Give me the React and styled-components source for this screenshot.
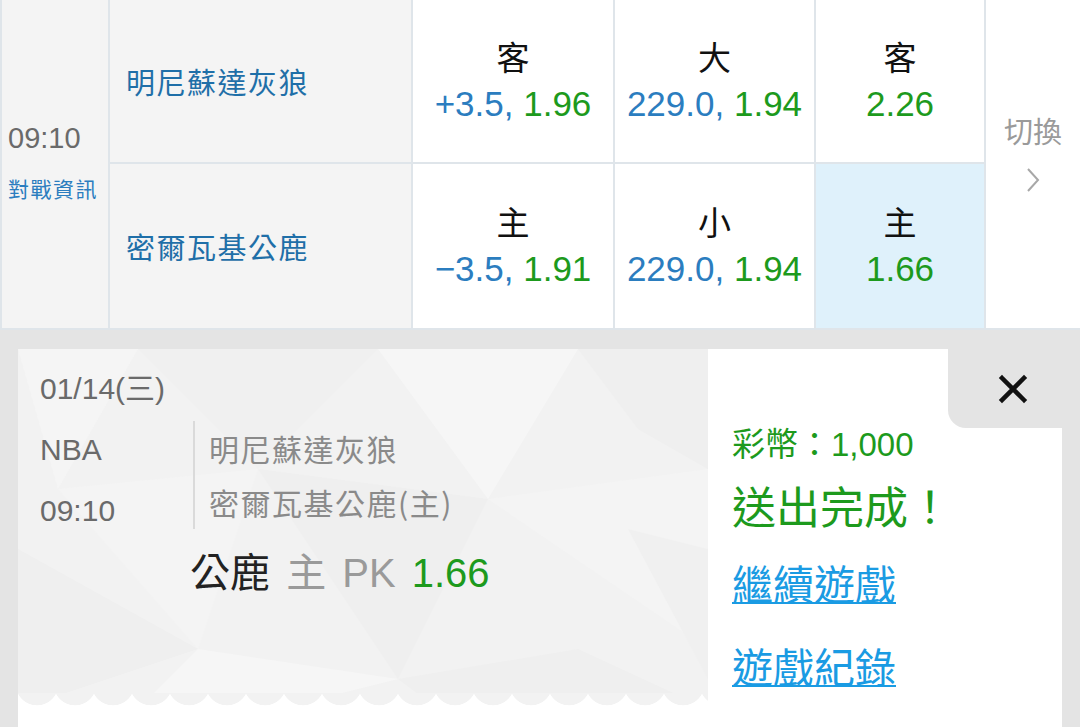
import React from "react";
import styled, { createGlobalStyle } from "styled-components";

const GlobalStyle = createGlobalStyle`
  html, body {
    margin: 0;
    padding: 0;
    background: #e4e4e4;
  }
  body {
    font-family: "Liberation Sans", "Noto Sans CJK TC", sans-serif;
  }
`;

const BLUE = "#2b7dbf";
const GREEN = "#1d9a1d";

const lowPoly = encodeURIComponent(`
<svg xmlns="http://www.w3.org/2000/svg" width="690" height="360" viewBox="0 0 690 360">
  <rect width="690" height="360" fill="#f2f2f2"/>
  <polygon points="0,0 120,0 40,140" fill="#f5f5f5"/>
  <polygon points="120,0 360,0 240,120" fill="#f0f0f0"/>
  <polygon points="360,0 560,0 470,150" fill="#f6f6f6"/>
  <polygon points="560,0 690,0 690,120 620,80" fill="#efefef"/>
  <polygon points="40,140 240,120 180,300" fill="#f4f4f4"/>
  <polygon points="240,120 470,150 380,330" fill="#efefef"/>
  <polygon points="470,150 690,120 690,300" fill="#f4f4f4"/>
  <polygon points="0,200 180,300 0,360" fill="#efefef"/>
  <polygon points="180,300 380,330 260,360 120,360" fill="#f6f6f6"/>
  <polygon points="380,330 560,300 690,360 420,360" fill="#efefef"/>
  <polygon points="610,180 690,200 690,330" fill="#f0f0f0"/>
</svg>`);

const Page = styled.div`
  width: 1080px;
  height: 727px;
  overflow: hidden;
  background: #e4e4e4;
`;

/* ---------- odds table ---------- */

const Table = styled.div`
  display: grid;
  grid-template-columns: 106px 301px 200px 199px 168px 1fr;
  grid-template-rows: 162px 164px;
  gap: 2px;
  padding-left: 2px;
  background: #dfe5ea;
  border-bottom: 2px solid #dfe5ea;
`;

const TimeCell = styled.div`
  grid-row: 1 / span 2;
  background: #f4f4f4;
  display: flex;
  flex-direction: column;
  justify-content: center;
  padding-left: 6px;
  padding-bottom: 6px;
`;

const TimeText = styled.div`
  font-size: 29px;
  line-height: 44px;
  margin-bottom: 10px;
  color: #6a6a6a;
`;

const InfoLink = styled.div`
  font-size: 21px;
  line-height: 36px;
  color: ${BLUE};
  font-family: "Noto Sans CJK TC", sans-serif;
  letter-spacing: 1.5px;
  white-space: nowrap;
`;

const TeamCell = styled.div`
  background: #f4f4f4;
  display: flex;
  align-items: center;
  padding-left: 16px;
  font-family: "Noto Sans CJK TC", sans-serif;
  font-size: 29px;
  color: #1f6fa8;
  letter-spacing: 1.5px;
`;

const OddsCell = styled.div`
  background: ${(p) => (p.$active ? "#dff1fb" : "#fff")};
  display: flex;
  flex-direction: column;
  align-items: center;
  justify-content: center;
`;

const OddsLabel = styled.div`
  font-family: "Noto Sans CJK TC", sans-serif;
  font-size: 33px;
  line-height: 46px;
  color: #111;
`;

const OddsValue = styled.div`
  font-size: 35px;
  line-height: 50px;
  white-space: nowrap;
`;

const Line = styled.span`
  color: ${BLUE};
`;

const Price = styled.span`
  color: ${GREEN};
`;

const SwitchCell = styled.div`
  grid-row: 1 / span 2;
  grid-column: 6;
  background: #fff;
  display: flex;
  flex-direction: column;
  align-items: center;
  justify-content: center;
  color: #9a9a9a;
  padding-bottom: 26px;
`;

const SwitchText = styled.div`
  font-family: "Noto Sans CJK TC", sans-serif;
  font-size: 29px;
  line-height: 44px;
  margin-bottom: 14px;
`;

/* ---------- result panel ---------- */

const Overlay = styled.div`
  padding: 19px 18px 0 18px;
`;

const Card = styled.div`
  display: flex;
  background: #fff;
  height: 380px;
`;

const Ticket = styled.div`
  width: 690px;
  display: flex;
  flex-direction: column;
`;

const TicketBody = styled.div`
  height: 344px;
  box-sizing: border-box;
  padding: 20px 22px 0 22px;
  background: #f2f2f2 url("data:image/svg+xml,${lowPoly}") no-repeat 0 0;
  color: #6a6a6a;
`;

const ZigZag = styled.div`
  height: 13px;
  background-image: radial-gradient(circle at 19px -9px, #f2f2f2 21px, transparent 21.6px);
  background-size: 38px 13px;
  background-repeat: repeat-x;
  background-position: 0 0;
`;

const DateText = styled.div`
  font-size: 30px;
  line-height: 40px;
`;

const InfoRow = styled.div`
  display: flex;
  align-items: flex-start;
  margin-top: 12px;
`;

const MetaCol = styled.div`
  width: 153px;
  font-size: 30px;
  line-height: 61px;
  margin-top: -2px;
`;

const TeamsCol = styled.div`
  border-left: 2px solid #dadada;
  padding-left: 14px;
  font-family: "Noto Sans CJK TC", sans-serif;
  font-size: 30px;
  line-height: 54px;
  color: #8a8a8a;
  letter-spacing: 1.5px;
`;

const PickLine = styled.div`
  margin-top: 4px;
  padding-left: 150px;
  font-size: 40px;
  line-height: 50px;
  word-spacing: 5px;
  white-space: nowrap;
`;

const PickTeam = styled.span`
  font-family: "Noto Sans CJK TC", sans-serif;
  color: #222;
`;

const PickSide = styled.span`
  color: #9a9a9a;
`;

const PickOdds = styled.span`
  color: ${GREEN};
`;

const Side = styled.div`
  flex: 1;
  display: flex;
  flex-direction: column;
`;

const TopBar = styled.div`
  display: flex;
  justify-content: flex-end;
`;

const CloseTab = styled.button`
  width: 114px;
  height: 79px;
  border: none;
  margin: 0;
  padding: 0 0 0 16px;
  background: #e4e4e4;
  border-bottom-left-radius: 18px;
  display: flex;
  align-items: center;
  justify-content: center;
`;

const SideContent = styled.div`
  padding-left: 24px;
  display: flex;
  flex-direction: column;
  align-items: flex-start;
  color: ${GREEN};
`;

const Coins = styled.div`
  font-size: 33px;
  line-height: 36px;
  margin-top: -1px;
  white-space: nowrap;
`;

const Done = styled.div`
  font-family: "Noto Sans CJK TC", sans-serif;
  font-size: 44px;
  line-height: 52px;
  margin-top: 16px;
`;

const ActionLink = styled.a`
  font-family: "Noto Sans CJK TC", sans-serif;
  font-size: 41px;
  line-height: 52px;
  color: #1a9be3;
  text-decoration: underline;
  text-decoration-thickness: 2px;
  text-underline-offset: 2px;
  margin-top: ${(p) => p.$gap}px;
  cursor: pointer;
`;

const CloseIcon = () => (
  <svg width="30" height="30" viewBox="0 0 30 30">
    <path d="M4 4 L26 26 M26 4 L4 26" stroke="#111" strokeWidth="4.5" strokeLinecap="square" />
  </svg>
);

const Chevron = () => (
  <svg width="16" height="28" viewBox="0 0 16 28">
    <path d="M3 3 L13 14 L3 25" fill="none" stroke="#a8a8a8" strokeWidth="2" />
  </svg>
);

const rows = [
  {
    team: "明尼蘇達灰狼",
    cells: [
      { label: "客", line: "+3.5, ", price: "1.96" },
      { label: "大", line: "229.0, ", price: "1.94" },
      { label: "客", line: "", price: "2.26" },
    ],
  },
  {
    team: "密爾瓦基公鹿",
    cells: [
      { label: "主", line: "−3.5, ", price: "1.91" },
      { label: "小", line: "229.0, ", price: "1.94" },
      { label: "主", line: "", price: "1.66", active: true },
    ],
  },
];

export default function App() {
  return (
    <Page>
      <GlobalStyle />
      <Table>
        <TimeCell>
          <TimeText>09:10</TimeText>
          <InfoLink>對戰資訊</InfoLink>
        </TimeCell>
        {rows.map((row, i) => (
          <React.Fragment key={row.team}>
            <TeamCell style={{ gridRow: i + 1 }}>{row.team}</TeamCell>
            {row.cells.map((c, j) => (
              <OddsCell key={j} $active={c.active} style={{ gridRow: i + 1 }}>
                <OddsLabel>{c.label}</OddsLabel>
                <OddsValue>
                  {c.line && <Line>{c.line}</Line>}
                  <Price>{c.price}</Price>
                </OddsValue>
              </OddsCell>
            ))}
          </React.Fragment>
        ))}
        <SwitchCell>
          <SwitchText>切換</SwitchText>
          <Chevron />
        </SwitchCell>
      </Table>

      <Overlay>
        <Card>
          <Ticket>
            <TicketBody>
              <DateText>01/14(三)</DateText>
              <InfoRow>
                <MetaCol>
                  <div>NBA</div>
                  <div>09:10</div>
                </MetaCol>
                <TeamsCol>
                  <div>明尼蘇達灰狼</div>
                  <div>密爾瓦基公鹿(主)</div>
                </TeamsCol>
              </InfoRow>
              <PickLine>
                <PickTeam>公鹿</PickTeam> <PickSide>主 PK</PickSide> <PickOdds>1.66</PickOdds>
              </PickLine>
            </TicketBody>
            <ZigZag />
          </Ticket>
          <Side>
            <TopBar>
              <CloseTab aria-label="close">
                <CloseIcon />
              </CloseTab>
            </TopBar>
            <SideContent>
              <Coins>彩幣：1,000</Coins>
              <Done>送出完成！</Done>
              <ActionLink $gap={25}>繼續遊戲</ActionLink>
              <ActionLink $gap={31}>遊戲紀錄</ActionLink>
            </SideContent>
          </Side>
        </Card>
      </Overlay>
    </Page>
  );
}
